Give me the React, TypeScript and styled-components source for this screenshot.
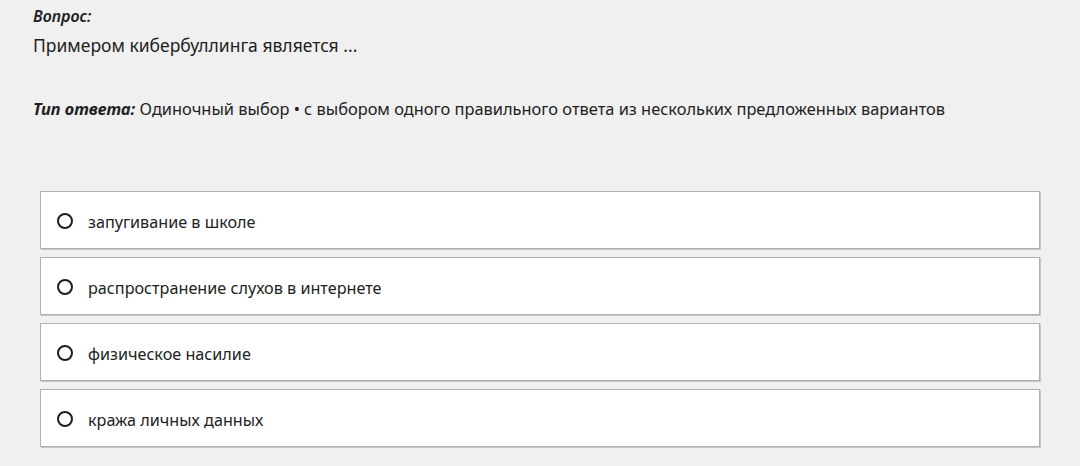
import React from "react";
import styled, { createGlobalStyle } from "styled-components";

const Global = createGlobalStyle`
  html, body {
    margin: 0;
    padding: 0;
    background: #f0f0f0;
  }
  body {
    font-family: "Noto Sans", "Open Sans", sans-serif;
    color: #222;
  }
`;

const Page = styled.div`
  width: 1080px;
  height: 466px;
  box-sizing: border-box;
  padding: 4px 40px 0 33px;
  display: flex;
  flex-direction: column;
`;

const Label = styled.div`
  font-size: 16px;
  font-style: italic;
  font-weight: 600;
  line-height: 24px;
  color: #222;
`;

const QuestionText = styled.div`
  font-size: 17.5px;
  line-height: 34px;
  color: #222;
`;

const AnswerType = styled.div`
  margin-top: 35px;
  font-size: 16.4px;
  line-height: 24px;
  color: #222;
  & b {
    font-style: italic;
    font-weight: 700;
  }
`;

const Options = styled.div`
  margin: 70px 0 0 7px;
  display: flex;
  flex-direction: column;
  gap: 8px;
`;

const Option = styled.label`
  height: 58px;
  box-sizing: border-box;
  background: #fff;
  border: 1px solid #b0b0b0;
  box-shadow: 1px 1px 0 #c6c6c6;
  display: flex;
  align-items: center;
  padding-left: 16px;
  gap: 15px;
  font-size: 16.2px;
  color: #222;
  cursor: pointer;
`;

const Radio = styled.span`
  width: 16px;
  height: 16px;
  box-sizing: border-box;
  border: 2px solid #1e1e1e;
  border-radius: 50%;
  margin-top: 1px;
  flex: none;
`;

const OptionText = styled.span`
  line-height: 24px;
  padding-top: 4px;
`;

const options = [
  "запугивание в школе",
  "распространение слухов в интернете",
  "физическое насилие",
  "кража личных данных",
];

export default function App() {
  return (
    <>
      <Global />
      <Page>
        <Label>Вопрос:</Label>
        <QuestionText>Примером кибербуллинга является ...</QuestionText>
        <AnswerType>
          <b>Тип ответа:</b> Одиночный выбор • с выбором одного правильного ответа из нескольких предложенных вариантов
        </AnswerType>
        <Options>
          {options.map((o) => (
            <Option key={o}>
              <Radio />
              <OptionText>{o}</OptionText>
            </Option>
          ))}
        </Options>
      </Page>
    </>
  );
}
